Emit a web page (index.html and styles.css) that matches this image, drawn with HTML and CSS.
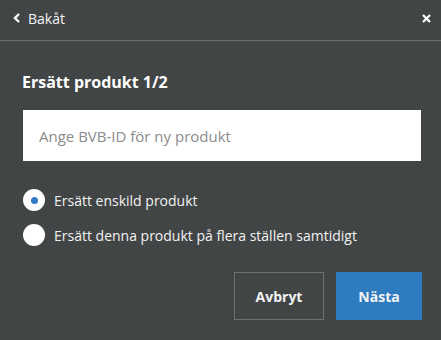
FILE: index.html
```html
<!DOCTYPE html>
<html lang="sv">
<head>
  <meta charset="utf-8">
  <title>Ersätt produkt</title>
  <link rel="stylesheet" href="styles.css">
</head>
<body>
  <div id="dialog">
    <div id="header" class="flex-row">
      <a id="back" class="flex-row" href="#">
        <svg width="8" height="10" viewBox="0 0 8 10"><path d="M6 1 L2 5 L6 9" fill="none" stroke="#fff" stroke-width="2.4"/></svg>
        <span>Bakåt</span>
      </a>
      <a id="close" href="#">
        <svg width="9" height="9" viewBox="0 0 9 9"><path d="M1 1 L8 8 M8 1 L1 8" fill="none" stroke="#fff" stroke-width="2.2"/></svg>
      </a>
    </div>

    <div id="content">
      <h1 id="title">Ersätt produkt 1/2</h1>
      <input id="product-id" type="text" placeholder="Ange BVB-ID för ny produkt">

      <div id="options">
        <label class="option flex-row">
          <span class="radio checked"></span>
          <span>Ersätt enskild produkt</span>
        </label>
        <label class="option flex-row">
          <span class="radio"></span>
          <span>Ersätt denna produkt på flera ställen samtidigt</span>
        </label>
      </div>

      <div id="actions" class="flex-row">
        <button id="cancel">Avbryt</button>
        <button id="next">Nästa</button>
      </div>
    </div>
  </div>
</body>
</html>
```
FILE: styles.css
```css
* {
  box-sizing: border-box;
}
html, body {
  margin: 0;
  height: 100%;
}
body {
  background-color: #424546;
  font-family: "Open Sans", sans-serif;
  color: #f2f2f2;
}
.flex-row {
  display: flex;
  align-items: center;
}
#header {
  height: 41px;
  border-bottom: 1px solid #6b6e6f;
  justify-content: space-between;
  padding: 0 10px 1px 13px;
}
#header a {
  color: #f4f4f4;
  text-decoration: none;
}
#back {
  gap: 7px;
  font-size: 14px;
  margin-top: -3px;
}
#close {
  display: flex;
  margin-top: -3px;
}
#content {
  padding: 30px 19px 0 23px;
}
#title {
  margin: 0 0 0 -1px;
  font-size: 16px;
  font-weight: bold;
  line-height: 22px;
  color: #ffffff;
}
#product-id {
  display: block;
  width: 398px;
  height: 51px;
  margin-top: 17px;
  border: none;
  outline: none;
  padding: 0 16px;
  font-family: "Open Sans", sans-serif;
  font-size: 15px;
  color: #333;
}
#product-id::placeholder {
  color: #8b8b8b;
}
#options {
  margin-top: 28px;
  display: flex;
  flex-direction: column;
  gap: 13px;
}
.option {
  gap: 9px;
  font-size: 14px;
  height: 22px;
}
.radio {
  width: 22px;
  height: 22px;
  border-radius: 50%;
  background-color: #fff;
  display: flex;
  align-items: center;
  justify-content: center;
}
.radio.checked::after {
  content: "";
  width: 7px;
  height: 7px;
  border-radius: 50%;
  background-color: #2f7bc4;
}
#actions {
  justify-content: flex-end;
  gap: 12px;
  margin-top: 26px;
}
#actions button {
  height: 48px;
  font-family: "Open Sans", sans-serif;
  font-size: 14px;
  font-weight: bold;
  color: #f2f2f2;
  cursor: pointer;
}
#cancel {
  width: 90px;
  background-color: transparent;
  border: 1px solid #6e7172;
}
#next {
  width: 86px;
  background-color: #2f7bbf;
  border: none;
}
```
